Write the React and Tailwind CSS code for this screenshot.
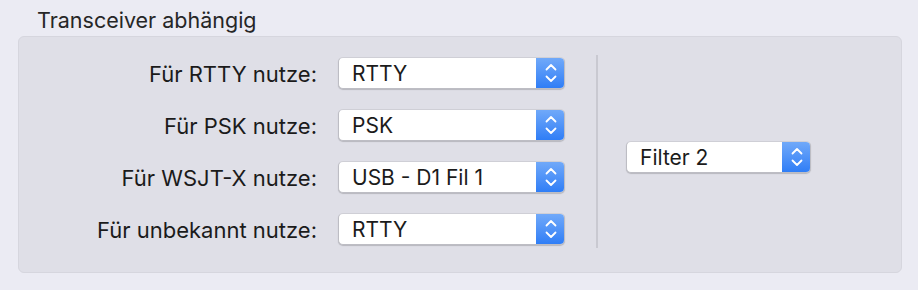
import React from "react";

function Chevrons() {
  return (
    <svg width="12" height="22" viewBox="0 0 12 22" fill="none">
      <path d="M1.5 7.5 L6 3 L10.5 7.5" stroke="white" strokeWidth="1.8" strokeLinecap="round" strokeLinejoin="round" />
      <path d="M1.5 14.5 L6 19 L10.5 14.5" stroke="white" strokeWidth="1.8" strokeLinecap="round" strokeLinejoin="round" />
    </svg>
  );
}

function Popup({ value, width }) {
  return (
    <div
      className={`flex h-[32px] ${width} rounded-[5px] border border-[#bdbdc4] border-t-[#cfcfd6] bg-white shadow-[0_1px_1px_rgba(0,0,0,0.18)] overflow-hidden`}
    >
      <div className="flex-1 pl-[13px] pt-[2px] text-[21px] leading-[28px] text-[#1b1b1b]">{value}</div>
      <div className="w-[29px] -my-px -mr-px flex items-center justify-center rounded-r-[5px] bg-gradient-to-b from-[#72aaf9] to-[#2c7cf6]">
        <Chevrons />
      </div>
    </div>
  );
}

const rows = [
  ["Für RTTY nutze:", "RTTY"],
  ["Für PSK nutze:", "PSK"],
  ["Für WSJT-X nutze:", "USB - D1 Fil 1"],
  ["Für unbekannt nutze:", "RTTY"],
];

export default function App() {
  return (
    <div className="w-[918px] h-[290px] bg-[#ebebf3] font-['Inter',sans-serif] overflow-hidden">
      <div className="pl-[37px] pt-[7px] text-[21.5px] leading-[26px] text-[#262626]">Transceiver abhängig</div>
      <div className="ml-[18px] mt-[3px] w-[884px] h-[237px] rounded-[6px] border border-[#d6d6de] bg-[#dfdfe7] flex items-start pt-[18px]">
        <div className="mt-[2px] grid grid-cols-[298px_227px] gap-x-[21px] gap-y-[20px]">
          {rows.map(([label, value]) => (
            <React.Fragment key={label}>
              <div className="h-[32px] text-right pt-[3px] text-[22px] leading-[28px] text-[#1b1b1b]">{label}</div>
              <Popup value={value} width="w-[227px]" />
            </React.Fragment>
          ))}
        </div>
        <div className="ml-[31px] w-[2px] h-[193px] bg-[#c9c9d1]" />
        <div className="ml-[28px] mt-[86px]">
          <Popup value="Filter 2" width="w-[185px]" />
        </div>
      </div>
    </div>
  );
}
